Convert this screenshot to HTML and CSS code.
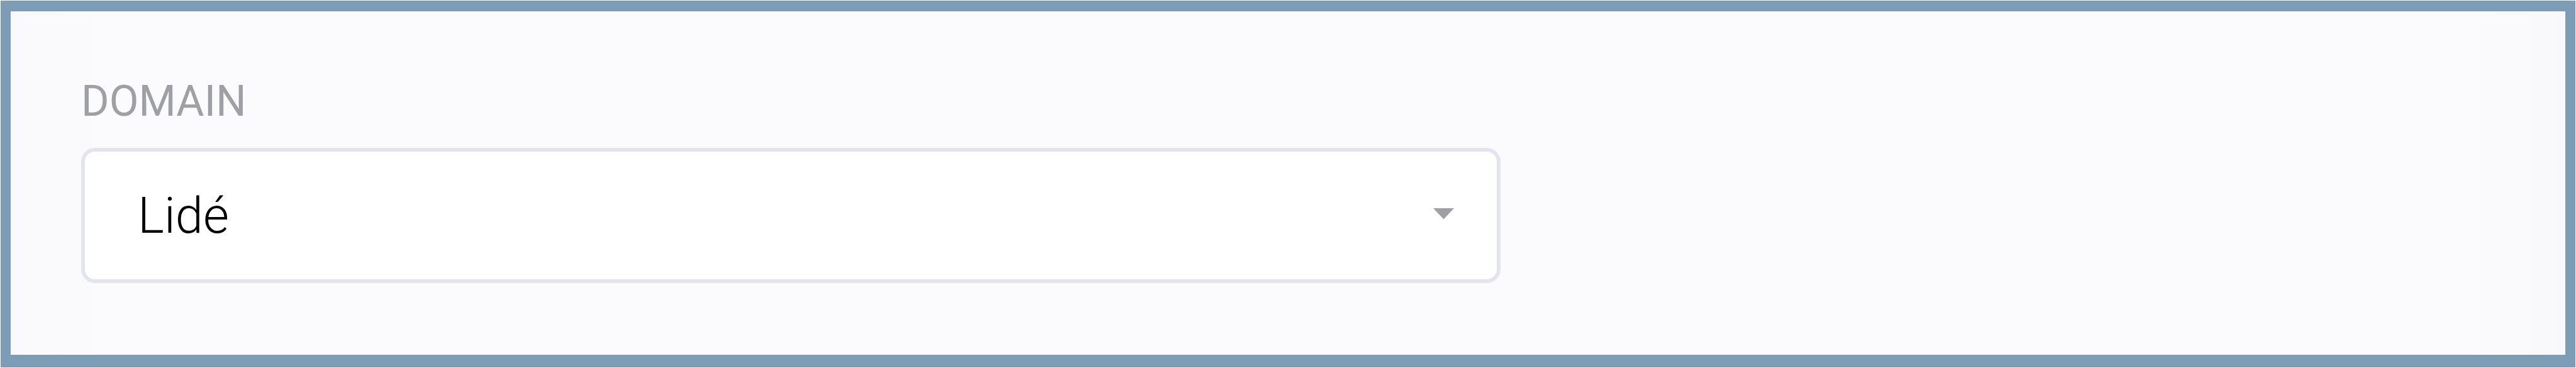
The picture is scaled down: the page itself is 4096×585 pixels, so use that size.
FILE: index.html
```html
<!DOCTYPE html>
<html lang="cs">
<head>
    <meta charset="UTF-8">
    <meta name="viewport" content="width=device-width, initial-scale=1.0">
    <link rel="stylesheet" href="styles.css">

    <title>Domain</title>
</head>
<body>

    <div class="panel">
        <div class="field">
            <span class="field-label" id="domain-label">DOMAIN</span>
            <div class="select" role="combobox" tabindex="0" aria-labelledby="domain-label">
                <span class="select-value">Lidé</span>
                <svg class="select-arrow" viewBox="0 0 33 18" aria-hidden="true">
                    <path d="M0 0h33L16.5 17.5z"/>
                </svg>
            </div>
        </div>
    </div>

</body>
</html>
```

FILE: styles.css
```css
* {
    box-sizing: border-box;
}

body {
    margin: 0;
    padding: 1px;
    height: 585px;
    background-color: #f5f7fa;
    font-family: Roboto, "Liberation Sans", sans-serif;
}

/* blue frame */
.panel {
    height: 583px;
    padding: 107px 0 0 112px;
    border: solid #7d9cb5;
    border-width: 17px 16px 20px 16px;
    background: linear-gradient(to right, #f9f9fc, #fbfbfe 160px, #fbfbfe calc(100% - 160px), #f8f8fb) padding-box;
}

.field {
    display: flex;
    flex-direction: column;
    width: 2257px;
}

.field-label {
    height: 110px;
    line-height: 73px;
    font-size: 68px;
    color: #9f9fa6;
}

/* select box */
.select {
    display: flex;
    align-items: center;
    justify-content: space-between;
    height: 215px;
    padding: 0 68px 0 84px;
    border: 6px solid #e2e5ee;
    border-radius: 22px;
    background-color: #fff;
}

.select-value {
    padding-top: 1px;
    font-size: 79.5px;
    font-weight: 300;
    line-height: 94px;
    color: #000;
}

.select-arrow {
    width: 33px;
    height: 18px;
    margin-bottom: 5px;
    fill: #9f9fa6;
}
```
